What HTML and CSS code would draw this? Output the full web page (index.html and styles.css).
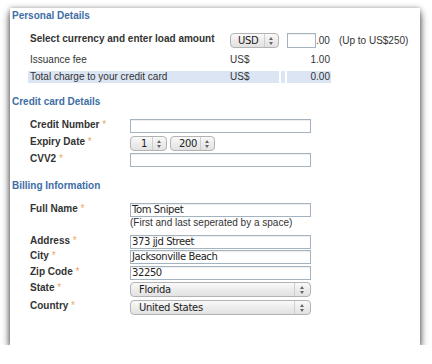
FILE: index.html
```html
<!DOCTYPE html>
<html>
<head>
<meta charset="utf-8">
<link rel="stylesheet" href="styles.css">
</head>
<body>
<div class="panel">
  <h2 class="heading h-personal">Personal Details</h2>
  <div class="amounts">
    <div class="trow row-main">
      <div class="cell lbl strong">Select currency and enter load amount</div>
      <div class="cell cur-cell">
        <span class="select sel-usd"><span class="sel-text">USD</span><span class="arrows"></span></span>
        <span class="input inp-amt"></span><span class="suffix">.00</span><span class="limit">(Up to US$250)</span>
      </div>
    </div>
    <div class="trow row-fee">
      <div class="cell lbl">Issuance fee</div>
      <div class="cell cur">US$</div>
      <div class="cell gap"></div>
      <div class="cell num">1.00</div>
    </div>
    <div class="trow row-total">
      <div class="cell lbl">Total charge to your credit card</div>
      <div class="cell cur">US$</div>
      <div class="cell gap"></div>
      <div class="cell num">0.00</div>
    </div>
  </div>

  <h2 class="heading h-cc">Credit card Details</h2>
  <div class="form form-cc">
    <div class="row r-ccnum">
      <label class="flabel">Credit Number <span class="req">*</span></label>
      <span class="input wide"></span>
    </div>
    <div class="row r-exp">
      <label class="flabel">Expiry Date <span class="req">*</span></label>
      <span class="exp">
        <span class="select sel-m"><span class="sel-text">1</span><span class="arrows"></span></span>
        <span class="select sel-y"><span class="sel-text">200</span><span class="arrows"></span></span>
      </span>
    </div>
    <div class="row r-cvv">
      <label class="flabel">CVV2 <span class="req">*</span></label>
      <span class="input wide"></span>
    </div>
  </div>

  <h2 class="heading h-bill">Billing Information</h2>
  <div class="form form-bill">
    <div class="row r-name">
      <label class="flabel">Full Name <span class="req">*</span></label>
      <span class="field">
        <span class="input wide val">Tom Snipet</span>
        <span class="hint">(First and last seperated by a space)</span>
      </span>
    </div>
    <div class="row r-addr">
      <label class="flabel">Address <span class="req">*</span></label>
      <span class="input wide val">373 jjd Street</span>
    </div>
    <div class="row r-city">
      <label class="flabel">City <span class="req">*</span></label>
      <span class="input wide val">Jacksonville Beach</span>
    </div>
    <div class="row r-zip">
      <label class="flabel">Zip Code <span class="req">*</span></label>
      <span class="input wide val">32250</span>
    </div>
    <div class="row r-state">
      <label class="flabel">State <span class="req">*</span></label>
      <span class="select wide-sel"><span class="sel-text">Florida</span><span class="arrows"></span></span>
    </div>
    <div class="row r-country">
      <label class="flabel">Country <span class="req">*</span></label>
      <span class="select wide-sel"><span class="sel-text">United States</span><span class="arrows"></span></span>
    </div>
  </div>
</div>
</body>
</html>
```

FILE: styles.css
```css
html, body {
  margin: 0;
  padding: 0;
  background: #ffffff;
}
body {
  padding: 8px 12px 0 10px;
  font-family: "Liberation Sans", Arial, sans-serif;
  font-size: 10px;
  color: #333333;
}
.panel {
  width: 410px;
  height: 337px;
  box-sizing: border-box;
  background: #ffffff;
  box-shadow: 0 5px 8px rgba(0,0,0,0.7), 0 0 5px rgba(0,0,0,0.3);
  padding: 1px 0 0 2px;
}
.heading {
  margin: 0;
  font-size: 10px;
  font-weight: bold;
  color: #3e6da6;
  line-height: 13px;
}

/* amounts table */
.amounts {
  margin: 10px 0 0 16px;
  display: flex;
  flex-direction: column;
  gap: 3px;
}
.trow {
  display: grid;
  grid-template-columns: 198px 51px 4px 44px;
  column-gap: 2px;
  line-height: 12px;
  white-space: nowrap;
}
.cell { padding: 0 2px; }
.strong { font-weight: bold; }
.row-main { height: 17px; }
.row-main .lbl { padding-top: 1px; }
.cur-cell {
  grid-column: 2 / 5;
  display: flex;
  align-items: center;
  padding: 0;
  min-width: 0;
  overflow: visible;
}
.cur-cell > * { flex-shrink: 0; }
.row-fee .cell { padding-top: 2px; height: 14px; }
.gap { padding: 0; }
.num { text-align: right; padding-right: 1px; }
.row-total .cell { background: #dbe5f4; height: 12px; }
.row-total .lbl { box-shadow: 2px 0 0 #dbe5f4; }

.select {
  display: inline-flex;
  align-items: center;
  box-sizing: border-box;
  height: 15px;
  border: 1px solid #b3b3b3;
  border-radius: 4px;
  background: linear-gradient(#fafafa, #ececec 50%, #e2e2e2);
  font-family: "DejaVu Sans", sans-serif;
  font-size: 10px;
  letter-spacing: -0.3px;
  color: #222;
  line-height: 12px;
}
.sel-text {
  flex: 1;
  padding-left: 8px;
  white-space: nowrap;
}
.arrows {
  width: 14px;
  height: 100%;
  border-left: 1px solid #cfcfcf;
  box-sizing: border-box;
  position: relative;
}
.arrows::before, .arrows::after {
  content: "";
  position: absolute;
  left: 4px;
  border-left: 2px solid transparent;
  border-right: 2px solid transparent;
}
.arrows::before {
  top: 3px;
  border-bottom: 3px solid #666;
}
.arrows::after {
  top: 8px;
  border-top: 3px solid #666;
}
.sel-usd { width: 49px; margin-left: 2px; }
.sel-usd .sel-text { padding-left: 7px; }
.input {
  display: inline-block;
  box-sizing: border-box;
  height: 14px;
  border: 1px solid #a3b3bf;
  background: #fff;
  box-shadow: inset 0 1px 1px rgba(0,0,0,0.07);
}
.inp-amt { width: 29px; margin-left: 8px; height: 15px; }
.suffix { margin-left: 0; }
.limit { margin-left: 9px; }

/* forms */
.form { margin-left: 18px; }
.row {
  display: grid;
  grid-template-columns: 100px 181px;
  align-items: start;
}
.flabel {
  font-weight: bold;
  line-height: 12px;
}
.req { color: #e9a765; font-weight: normal; }
.wide { width: 181px; }
.wide-sel { width: 181px; }
.wide-sel .arrows { width: 16px; }
.wide-sel .arrows::before, .wide-sel .arrows::after { left: 5px; }
.val {
  font-family: "DejaVu Sans", sans-serif;
  font-size: 10px;
  letter-spacing: -0.4px;
  line-height: 12px;
  color: #222;
  padding-left: 1px;
  white-space: nowrap;
}
.field { display: flex; flex-direction: column; }
.hint { line-height: 11px; margin-top: 0; white-space: nowrap; }
.exp { display: flex; gap: 3px; }
.sel-m { width: 37px; }
.sel-m .sel-text { padding-left: 10px; }
.sel-y { width: 45px; }

.h-cc { margin-top: 12px; }
.form-cc { margin-top: 11px; }
.r-exp { margin-top: 3px; }
.r-cvv { margin-top: 2px; }

.h-bill { margin-top: 12px; }
.form-bill { margin-top: 11px; }
.r-addr { margin-top: 7px; }
.r-city { margin-top: 1px; }
.r-zip { margin-top: 2px; }
.r-state { margin-top: 2px; }
.r-country { margin-top: 3px; }
```
